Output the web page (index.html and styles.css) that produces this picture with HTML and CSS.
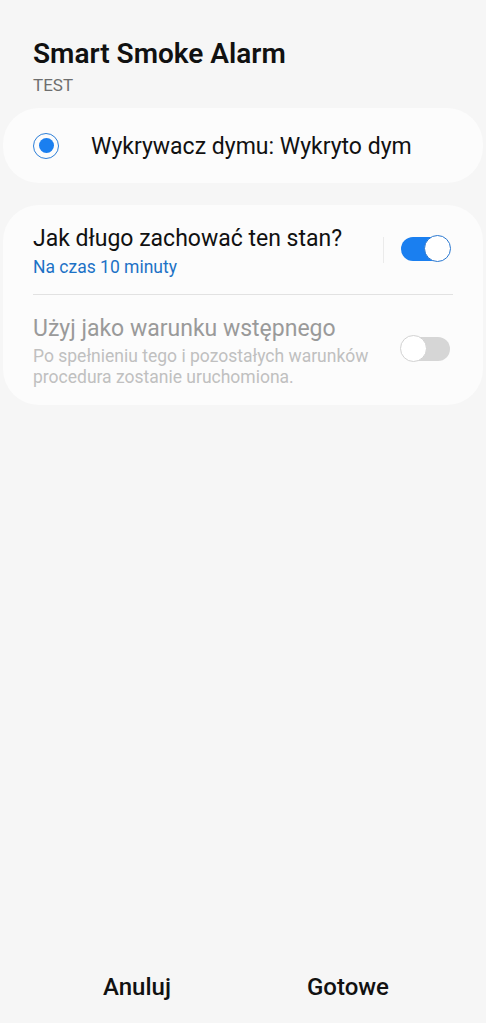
FILE: index.html
```html
<!doctype html>
<html>
<head>
<meta charset="utf-8">
<title>Smart Smoke Alarm</title>
<link rel="stylesheet" href="styles.css">
</head>
<body>
    <div class="page">
        <div class="header">
            <h1>Smart Smoke Alarm</h1>
            <div class="sub">TEST</div>
        </div>

        <!-- wybrany stan -->
        <div class="card state">
            <span class="radio"><span class="dot"></span></span>
            <span class="state-text">Wykrywacz dymu: Wykryto dym</span>
        </div>

        <!-- opcje -->
        <div class="card options">
            <div class="row">
                <div class="row-text">
                    <div class="row-title">Jak długo zachować ten stan?</div>
                    <div class="row-value">Na czas 10 minuty</div>
                </div>
                <span class="vline"></span>
                <span class="toggle on"><span class="thumb"></span></span>
            </div>
            <div class="divider"></div>
            <div class="row disabled">
                <div class="row-text">
                    <div class="row-title">Użyj jako warunku wstępnego</div>
                    <div class="row-desc">Po spełnieniu tego i pozostałych warunków procedura zostanie uruchomiona.</div>
                </div>
                <span class="toggle off"><span class="thumb"></span></span>
            </div>
        </div>

        <div class="spacer"></div>

        <div class="footer">
            <span class="btn">Anuluj</span>
            <span class="btn">Gotowe</span>
        </div>
    </div>
</body>
</html>
```

FILE: styles.css
```css
body{
    margin: 0;
    background: #f6f6f6;
    font-family: Roboto, "Noto Sans", "Liberation Sans", sans-serif;
    color: #111;
}
.page{
    height: 1023px;
    display: flex;
    flex-direction: column;
}

/* naglowek */
.header{
    padding: 37px 33px 0;
}
.header h1{
    margin: 0;
    font-size: 28px;
    line-height: 34px;
    font-weight: 600;
    color: #111;
}
.sub{
    margin-top: 3px;
    font-size: 17px;
    line-height: 22px;
    color: #6e6e6e;
}

/* karty */
.card{
    margin: 12px 3px 0;
    background: #fcfcfc;
    border-radius: 36px;
}
.state{
    height: 75px;
    display: flex;
    align-items: center;
    padding: 0 29px 0 30px;
}
.radio{
    width: 24px;
    height: 24px;
    border: 1.5px solid #2d7fd8;
    border-radius: 50%;
    display: flex;
    align-items: center;
    justify-content: center;
}
.radio .dot{
    width: 15px;
    height: 15px;
    border-radius: 50%;
    background: #1a7ff0;
}
.state-text{
    margin-left: 32px;
    padding-top: 3px;
    font-size: 23px;
    line-height: 28px;
}

.options{
    margin-top: 22px;
    padding: 20px 30px 17px;
}
.row{
    display: flex;
    align-items: flex-start;
}
.row-text{
    flex: 1;
}
.row-title{
    font-size: 23px;
    line-height: 28px;
}
.row-value{
    margin-top: 3px;
    font-size: 17.5px;
    line-height: 22px;
    color: #1c72c6;
}
.vline{
    width: 1px;
    height: 26px;
    margin-top: 12px;
    margin-right: 17px;
    background: #ebebeb;
}
.divider{
    height: 1px;
    background: #e2e2e2;
    margin: 16px 0 20px;
}
.disabled .row-title{
    color: #9a9a9a;
}
.row-desc{
    margin-top: 3px;
    font-size: 17.5px;
    line-height: 21px;
    color: #c0c0c0;
}

/* przelaczniki */
.toggle{
    position: relative;
    flex: none;
    width: 49px;
    height: 24px;
    margin-top: 12px;
    margin-right: 3px;
    border-radius: 12px;
}
.toggle .thumb{
    position: absolute;
    top: -2px;
    width: 25px;
    height: 25px;
    border-radius: 50%;
    background: #fff;
}
.toggle.on{
    background: #1a7ff0;
}
.toggle.on .thumb{
    right: -1px;
    border: 1.5px solid #2a78d0;
}
.toggle.off{
    margin-top: 22px;
    background: #d6d6d6;
}
.toggle.off .thumb{
    left: -1px;
    border: 1.5px solid #d2d2d2;
}

.spacer{
    flex: 1;
}

/* przyciski */
.footer{
    display: flex;
    gap: 31px;
    padding: 0 0 16px 47px;
}
.btn{
    width: 180px;
    text-align: center;
    font-size: 24px;
    font-weight: 500;
    line-height: 40px;
}
```
